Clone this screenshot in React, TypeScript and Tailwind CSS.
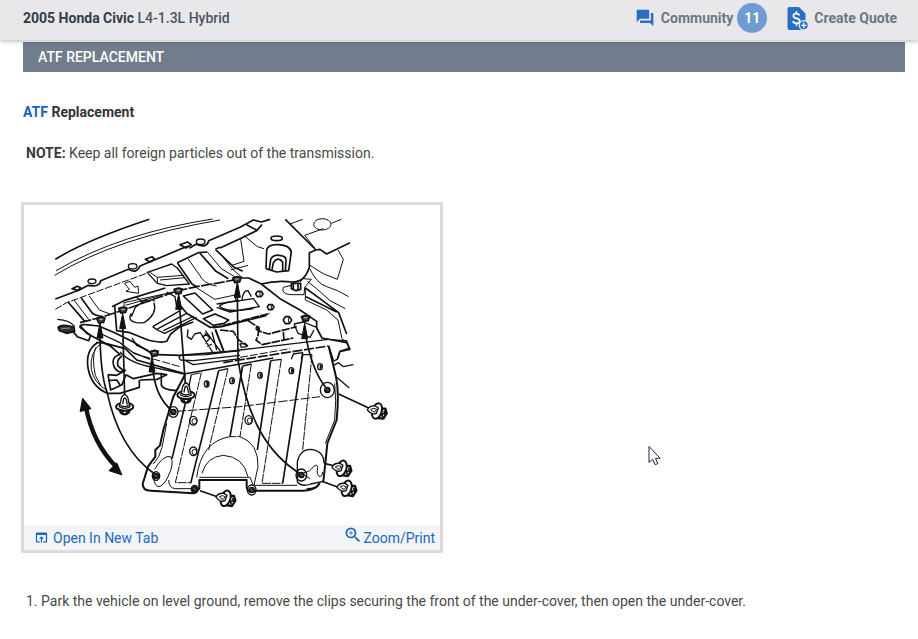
import React from "react";
import { MdForum, MdOpenInBrowser, MdZoomIn } from "react-icons/md";

function QuoteIcon() {
  return (
    <svg viewBox="0 0 22 25" className="h-[25px] w-[22px] shrink-0" aria-hidden="true">
      <path
        d="M2.5 1H12l6.5 6.5V22a2 2 0 0 1-2 2h-14a2 2 0 0 1-2-2V3a2 2 0 0 1 2-2z"
        fill="#2a70c2"
      />
      <path
        d="M12.4 9.6C12 8.2 10.900 7.600 9.300 7.600c-1.800 0-3 .9-3 2.300 0 3.200 6.400 1.600 6.400 5 0 1.500-1.300 2.400-3.200 2.400-2 0-3.200-.9-3.500-2.500M9.400 5.200v2.400M9.400 17.300v2.400"
        fill="none"
        stroke="#fff"
        strokeWidth="1.700"
      />
      <circle cx="16.800" cy="19.300" r="4.600" fill="#2a70c2" stroke="#e8e8ea" strokeWidth="1.300" />
      <path d="M16.800 16.600v5.400M14.100 19.300h5.400" stroke="#fff" strokeWidth="1.300" />
    </svg>
  );
}

const sideClips = [
  { x: 612, y: 894 },
  { x: 1066, y: 632 },
  { x: 960, y: 804 },
  { x: 975, y: 864 },
];

const uprightClips = [
  { x: 314, y: 620 },
  { x: 498, y: 585 },
];

const smallHoles = [
  { x: 560, y: 552 },
  { x: 636, y: 542 },
  { x: 720, y: 526 },
  { x: 814, y: 512 },
  { x: 900, y: 500 },
];

const largeHoles = [
  { x: 520, y: 662 },
  { x: 520, y: 754 },
  { x: 686, y: 660 },
];

const washers = [
  { x: 460, y: 636, r: 14 },
  { x: 408, y: 828, r: 11 },
  { x: 844, y: 825, r: 16 },
  { x: 922, y: 570, r: 21 },
  { x: 524, y: 868, r: 10 },
  { x: 695, y: 870, r: 13 },
];

const bolts = [
  { x: 242, y: 361 },
  { x: 308, y: 331 },
  { x: 474, y: 274 },
  { x: 402, y: 461 },
  { x: 650, y: 240 },
  { x: 856, y: 356 },
];

const arrowHeads = [
  { x: 240, y: 368 },
  { x: 308, y: 340 },
  { x: 476, y: 282 },
  { x: 652, y: 246 },
  { x: 854, y: 370 },
  { x: 396, y: 470 },
];

function UnderCoverDrawing() {
  return (
    <svg
      viewBox="12 15 1248 960"
      className="block w-full"
      role="img"
      aria-label="Under-cover removal"
      fill="none"
      stroke="#111"
      strokeWidth="4"
      strokeLinejoin="round"
    >
      {/* body, left half */}
      <g>
        <path d="M106 178Q200 120 388 58" strokeWidth="5" />
        <path d="M104 226Q290 112 600 60M108 212Q300 100 578 57" strokeWidth="3" />
        <path d="M106 297L178 270L205 256Q240 262 242 242L325 208Q350 222 360 198L480 148L505 138M508 145L528 133Q562 146 566 122L660 82L700 60L724 66L750 58M600 144L660 116L710 92L726 74M680 74L712 92" strokeWidth="5" />
        <path d="M156 266l16-7 10 4-8 8zM376 178l20-8 8 7-14 9zM480 134l22-8 12 8-16 10z" strokeWidth="5" />
        <ellipse cx="216" cy="244" rx="12" ry="7" />
        <ellipse cx="338" cy="199" rx="13" ry="8" />
        <ellipse cx="542" cy="125" rx="13" ry="8" />
        <path d="M106 328L140 308L385 218" strokeWidth="3" strokeDasharray="22 5" />
        <path d="M380 218L455 192L472 204L508 252L440 257L412 250L384 220" />
        <path d="M388 216L412 232L490 226M412 232V250M420 240L494 233" strokeWidth="3" />
        <path d="M314 250l16-6 14 18 10-4 2 22-38-6 10-6z" strokeWidth="3" />
        <path d="M144 306L195 365M184 294L216 338Q222 346 250 350" strokeWidth="5" />
        <path d="M162 300L206 358M208 288L238 330L270 342" strokeWidth="3" />
        <path d="M180 368L250 350L320 327L400 298L475 272L530 260L600 248L650 238" strokeWidth="5" strokeDasharray="34 4" />
        <path d="M472 188L535 158L562 156M472 188L516 252L530 260M540 160L588 214L625 236M586 148L640 200L668 214M586 148L600 142" strokeWidth="5" />
        <path d="M504 176L546 236Q560 254 590 258M562 156L604 206L660 240M528 262L584 298L650 284" strokeWidth="3" />
        <path d="M276 320L312 302L436 264M284 316L290 392L330 398L384 420Q424 430 440 424L452 402L480 380L520 366" strokeWidth="5" />
        <path d="M312 326V308L460 276M316 316L430 284" strokeWidth="3" />
        <path d="M334 340Q320 362 350 368Q372 370 376 366Q412 340 402 308M376 300L346 322L334 350M386 306Q394 294 404 304M350 292l14 12 20-4" strokeWidth="4" />
        <path d="M398 380L480 332M410 388L500 340M430 392L522 348M398 380L412 390L434 400L530 352" strokeWidth="4" />
        <path d="M490 288L525 279L578 330L548 342zM550 356L585 342L626 360L612 370L580 376zM470 304L500 340L570 382L605 380L740 346" strokeWidth="5" />
        <path d="M440 276L465 290L470 320M598 318Q610 306 660 302M598 318Q620 340 700 326" strokeWidth="4" />
        <path d="M112 358Q150 360 164 380" />
        <path d="M114 382Q126 370 162 382L164 394L140 400L118 392z" fill="#333" strokeWidth="5" />
        <path d="M124 386L150 384" stroke="#bbb" strokeWidth="2" />
        <path d="M160 396L172 410L206 422L212 406L180 382Q180 372 196 374" strokeWidth="5" />
        <path d="M180 376L200 400L256 430L316 446L350 480L490 520M196 374L236 378L284 398L340 426L392 458M412 464L480 466L660 452" strokeWidth="5" />
        <path d="M336 414L350 436L386 452M244 402L300 428L340 458L390 478" strokeWidth="4" />
        <path d="M540 396L580 460M556 392L606 460M504 388L502 410L514 418L524 402L540 398M556 430L570 414L554 400M576 396L590 450M546 412L560 402M562 440L576 432" />
        <path d="M586 388L612 456" strokeWidth="6" />
      </g>

      {/* body, right half */}
      <g transform="translate(600 0)">
        <path d="M62 118L74 108L112 140L132 146M62 118L72 184L36 196M0 160L40 210L66 232M32 210L84 196" strokeWidth="3" />
        <path d="M196 58L288 150L268 158V200Q256 246 216 246Q170 240 124 252L86 234H60M288 150L300 148L320 162L390 128" strokeWidth="5" />
        <path d="M210 72L248 58M284 144L254 106L310 86M334 70L364 58" strokeWidth="3" />
        <ellipse cx="307" cy="73" rx="26" ry="17" strokeWidth="3" />
        <ellipse cx="170" cy="115" rx="17" ry="7" strokeWidth="5" />
        <path d="M138 206L140 150Q144 132 176 134Q210 136 214 156L206 212L170 216L138 206" strokeWidth="5" />
        <path d="M148 208L152 178Q160 163 178 166Q200 168 198 182L196 214M156 210L160 188Q174 168 188 186V214" strokeWidth="5" />
        <path d="M354 150L370 178L352 238Q310 226 270 196M268 204Q290 250 320 260Q350 268 386 290M262 244L290 266L330 302L376 326" strokeWidth="3" />
        <path d="M124 252L180 296L240 330L290 364V384L306 414L380 428L390 448L360 454L352 478" strokeWidth="5" />
        <path d="M256 262V300L320 330L354 360L366 416L384 432" strokeWidth="3" />
        <path d="M256 264L300 296L356 338L380 402M258 290L350 336" strokeWidth="5" />
        <path d="M190 262Q182 280 210 284L252 284L254 262L274 238L250 236L240 246M190 262L214 256" strokeWidth="3" />
        <path d="M214 250h28v18l-14 4-14-6zM220 250v18M234 250v18" strokeWidth="5" />
        <path d="M-10 312L100 296L118 320L30 336L-10 322M66 298Q70 270 84 272L94 290M48 300L44 286" strokeWidth="4" />
        <path d="M-20 384L150 340M84 362L112 380L120 394L146 402L230 380M112 384Q120 400 108 420L126 434M190 396L192 422M0 390L40 394L56 420L84 438M126 434L220 414" strokeWidth="5" strokeDasharray="26 3" />
        <path d="M222 372L250 366L290 382M222 372L234 400L270 412L282 390" />
        <path d="M112 274h12l5 8-5 8h-12l-5-8zM146 314h11l5 7-5 8h-11l-4-8zM196 350h12l7 10-7 11h-12l-6-11z" strokeWidth="5" />
        <path d="M120 276V289M154 316V327M206 352V368" strokeWidth="3" />
        <circle cx="113" cy="385" r="5" />
        <path d="M214 478L220 462L248 458L244 478M60 432L76 430L80 440L64 442z" />
      </g>

      {/* bushing and lower rail */}
      <g transform="translate(0 420)">
        <path d="M232 8Q196 30 204 84Q214 140 262 160L300 160L358 142V120" strokeWidth="5" />
        <path d="M240 12Q208 40 214 88Q222 130 262 152M228 22Q214 50 226 106L244 140" strokeWidth="3" />
        <path d="M228 8Q262 6 280 26L300 44Q272 50 282 80Q294 104 316 90M306 48Q288 60 294 78L310 92" strokeWidth="5" />
        <path d="M264 104L290 106L318 90M264 104L272 150L306 134L318 104M318 104L340 116L410 100L440 104L412 118L360 120M264 122L290 120L300 134" strokeWidth="5" />
        <path d="M300 36Q330 70 400 82L492 102L660 72L760 54M480 46L560 44L660 30L926 -2M480 46Q474 54 482 60L520 62L660 46M492 60L520 74L660 56" strokeWidth="4" />
        <path d="M340 40L480 80M660 52L810 26" strokeWidth="3" strokeDasharray="24 6" />
        <path d="M610 68L720 50L926 18" strokeWidth="5" strokeDasharray="30 5" />
        <path d="M424 98V136Q430 150 472 152" strokeWidth="5" />
      </g>

      {/* cover panel */}
      <g transform="translate(0 420)">
        <path d="M495 104L460 170L430 270L420 316L406 330V350L384 380L368 432Q368 452 392 452L520 460L538 446V420H680V442Q684 462 708 452H850Q890 450 898 430" strokeWidth="6" />
        <path d="M440 250L426 322L416 350L400 372M446 420Q446 444 466 446L516 446M538 412H690L700 436H832" strokeWidth="3" />
        <path d="M404 388Q430 344 452 350Q464 370 444 410Q430 440 414 440Q396 430 404 396" strokeWidth="3" />
        <path d="M496 190L456 356M596 92L512 430M668 78L630 290M752 62L712 330M848 44L788 430" strokeWidth="5" />
        <path d="M514 104L544 98L466 428H512M624 86L566 330M694 72L660 290H630M784 58L726 430H788M876 44L848 330" strokeWidth="3" strokeDasharray="26 3" />
        <path d="M596 92L624 86M668 78L694 72M752 62L784 58M848 44H876M514 104L496 190" />
        <path d="M530 412Q544 304 630 290M660 290Q716 310 714 380L702 436M546 400Q560 350 610 346Q670 350 684 410" strokeWidth="3" />
        <path d="M470 214L660 200L900 170" strokeWidth="3" strokeDasharray="28 6" />
        <path d="M926 18L948 110Q958 160 950 240L922 310L916 370L910 424" strokeWidth="6" />
        <path d="M944 130Q950 180 944 240L916 310" strokeWidth="3" />
        <path d="M832 426V366Q840 328 872 328Q912 332 912 370M832 426Q846 442 872 432L910 424M900 430Q890 446 860 446" strokeWidth="4" />
        <path d="M852 398Q870 396 880 380Q892 370 893 382Q888 406 900 410Q908 408 908 396M852 404L870 416" strokeWidth="3" />
        <path d="M940 76L956 68L970 80L1000 74M948 110L988 144M926 18L940 60M936 0L980 2L988 24L960 34L952 58L938 64" />
        <path d="M956 162L1046 204M912 370L945 378M905 424L955 442M540 452L592 470" strokeWidth="5" />
      </g>

      {/* leader lines */}
      <path d="M240 390Q240 520 262 580C284 680 330 770 404 822M308 370L314 586M478 310L496 550M652 280L654 480C680 650 740 760 842 822M856 400Q874 510 920 566M398 500Q404 590 456 632" strokeWidth="5" />
      {arrowHeads.map((a) => (
        <path
          key={a.x}
          d="M0 0L9 46H-9z"
          transform={`translate(${a.x} ${a.y})`}
          fill="#111"
          strokeWidth="3"
        />
      ))}
      {bolts.map((b) => (
        <g key={b.x} transform={`translate(${b.x} ${b.y})`}>
          <path d="M-12-6L2-10L13-7L9 6L-6 8z" fill="#444" strokeWidth="5" />
          <path d="M-4-3L6-3" stroke="#fff" strokeWidth="2" />
        </g>
      ))}
      {smallHoles.map((h) => (
        <g key={h.x} transform={`translate(${h.x} ${h.y})`}>
          <ellipse rx="7" ry="9" strokeWidth="4" />
          <path d="M2-6V6" strokeWidth="6" />
        </g>
      ))}
      {largeHoles.map((h) => (
        <g key={h.y} transform={`translate(${h.x} ${h.y})`}>
          <ellipse rx="11" ry="13" />
          <ellipse cx="3" cy="2" rx="7" ry="8" strokeWidth="3" />
        </g>
      ))}
      {washers.map((w) => (
        <g key={w.x} transform={`translate(${w.x} ${w.y})`}>
          <ellipse rx={w.r} ry={w.r + 2} />
          <circle r="8" fill="#222" />
          <path d="M-4-5L4 3" stroke="#aaa" strokeWidth="2" />
        </g>
      ))}
      {sideClips.map((c) => (
        <g key={c.x} transform={`translate(${c.x} ${c.y})`}>
          <path d="M14-6L30-6L34 8L24 24L10 22z" fill="#fff" strokeWidth="7" />
          <path d="M18 4L22 20M26 0L30 14M16 12L32 6" strokeWidth="5" />
          <ellipse cx="5" cy="1" rx="14" ry="24" transform="rotate(18 5 1)" fill="#fff" strokeWidth="6" />
          <path d="M-24-2Q-18-16 0-14L9-8L3 8Q-10 14-24-2z" fill="#fff" strokeWidth="4" />
          <path d="M-14-4Q-4-10 4-4L-2 4Q-10 4-14-4" strokeWidth="3" />
        </g>
      ))}
      {uprightClips.map((c) => (
        <g key={c.x} transform={`translate(${c.x} ${c.y})`}>
          <path d="M-16 6L-12 18Q0 28 12 18L16 6z" fill="#fff" strokeWidth="7" />
          <path d="M-6 12V22M6 12V22" strokeWidth="5" />
          <ellipse cy="0" rx="26" ry="12" fill="#fff" strokeWidth="6" />
          <path d="M-16 0Q-12-12-10-26Q0-46 10-26Q12-12 16 0Q0 10-16 0z" fill="#fff" />
          <path d="M-6-8L-3-24Q2-30 5-20L8-6M-12-4Q0 4 12-4" strokeWidth="4" />
        </g>
      ))}

      {/* swing direction */}
      <path d="M197 618Q218 730 290 802" strokeWidth="13" />
      <path d="M188 596L181 634L212 626zM305 824L268 812L290 790z" fill="#111" />
    </svg>
  );
}

function MousePointer() {
  return (
    <svg
      viewBox="0 0 14 22"
      className="pointer-events-none absolute top-[445px] left-[648px] h-[22px] w-[14px]"
      aria-hidden="true"
    >
      <path
        d="M1 1.500V17.500L4.600 14.200L7.200 19.800L9.800 18.500L7.500 13.300H12.200z"
        fill="#fff"
        stroke="#23233a"
      />
    </svg>
  );
}

export default function App() {
  return (
    <div className="relative min-h-screen bg-white font-['Roboto',sans-serif] text-sm text-[#484848]">
      <header className="relative z-10 flex h-10 items-center justify-between bg-[#e8e8ea] pr-[21px] pb-1 pl-[23px] shadow-[0_1px_5px_rgba(0,0,0,0.3)]">
        <h1 className="font-medium text-[#4a5464]">
          <span className="font-bold text-[#333c4a]">2005 Honda Civic</span> L4-1.3L Hybrid
        </h1>
        <nav className="flex items-center gap-5 font-bold text-[#6a7785]">
          <a href="#community" className="flex items-center">
            <MdForum className="mr-1.5 size-5 text-[#2a70c2]" />
            Community
            <span className="ml-1 flex size-[30px] items-center justify-center rounded-full bg-[#6f9bd1] text-white">
              11
            </span>
          </a>
          <a href="#quote" className="flex items-center gap-[5px]">
            <QuoteIcon />
            Create Quote
          </a>
        </nav>
      </header>

      <main className="pt-0.5 pr-[13px] pl-[23px]">
        <h2 className="bg-[#717d8b] px-[15px] py-[5px] leading-5 font-medium text-white">
          ATF REPLACEMENT
        </h2>

        <h3 className="mt-[30px] leading-5 font-bold text-[#333]">
          <a href="#atf" className="text-[#1b62b5]">
            ATF
          </a>{" "}
          Replacement
        </h3>

        <p className="mt-[21px] pl-[3px] leading-5">
          <b className="font-bold text-[#3a3a3a]">NOTE:</b> Keep all foreign particles out of the
          transmission.
        </p>

        <figure className="mt-[39px] -ml-0.5 w-full max-w-[422px] border-[3px] border-[#dcdcdc]">
          <UnderCoverDrawing />
          <figcaption className="flex h-[25px] items-center justify-between bg-[#f3f4f8] pr-[5px] pl-2.5 text-[#1b68b8]">
            <a href="#open" className="flex items-center gap-1">
              <MdOpenInBrowser className="size-[15px]" />
              Open In New Tab
            </a>
            <a href="#zoom" className="flex items-center">
              <MdZoomIn className="mb-1.5 size-5" />
              Zoom/Print
            </a>
          </figcaption>
        </figure>

        <ol className="mt-[38px] list-inside list-decimal pl-[3px] leading-5">
          <li>
            Park the vehicle on level ground, remove the clips securing the front of the
            under-cover, then open the under-cover.
          </li>
        </ol>
      </main>

      <MousePointer />
    </div>
  );
}
